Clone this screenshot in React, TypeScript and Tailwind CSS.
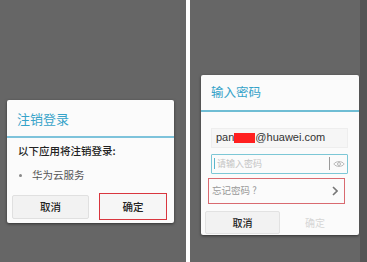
import React from 'react'

const cjk = { fontFamily: '"Noto Sans CJK SC", "Noto Sans", sans-serif' }

function LogoutPanel() {
  return (
    <div className="w-[186px] h-full bg-[#666666] pt-[100px] pl-[7px]">
      <div className="w-[167px] h-[123px] bg-[#fbfbfb] rounded-[2px] shadow-[0_1px_3px_rgba(0,0,0,0.5)] flex flex-col">
        {/* Title */}
        <div className="h-[36px] flex items-center pl-[10px] pt-[2px] text-[13px] text-[#36a3c9]">注销登录</div>
        <div className="h-[2px] bg-[#7ec3db]" />
        {/* Body */}
        <div className="pl-[11px] pt-[5px] text-[10.5px] font-medium text-[#222] leading-[16px]">以下应用将注销登录:</div>
        <div className="flex items-center pl-[12px] pt-[8px] text-[10.5px] text-[#555] leading-[16px]">
          <span className="w-[3px] h-[3px] rounded-full bg-[#888] mr-[10px]" />
          华为云服务
        </div>
        {/* Buttons */}
        <div className="flex items-center pl-[5px] pt-[10px] gap-[10px]">
          <button className="w-[77px] h-[24px] bg-[#f2f2f2] border border-[#e0e0e0] rounded-[2px] text-[10.5px] font-medium text-[#222]">
            取消
          </button>
          <button className="w-[68px] h-[27px] bg-[#f6f6f6] border border-[#d9363e] text-[10.5px] font-medium text-[#222]">
            确定
          </button>
        </div>
      </div>
    </div>
  )
}

function EyeIcon() {
  return (
    <svg width="12" height="8" viewBox="0 0 12 8" fill="none" stroke="#b9b9b9" strokeWidth="1">
      <path d="M0.8 4 C3 0.8 9 0.8 11.2 4 C9 7.2 3 7.2 0.8 4 Z" />
      <circle cx="6" cy="4" r="1.5" />
    </svg>
  )
}

function PasswordPanel() {
  return (
    <div className="flex-1 h-full bg-[#666666] pt-[75px] pl-[11px] flex">
      <div className="w-[158px] h-[160px] bg-[#fbfbfb] rounded-[2px] shadow-[0_1px_3px_rgba(0,0,0,0.5)] flex flex-col">
        {/* Title */}
        <div className="h-[35px] flex items-center pl-[10px] text-[12.5px] text-[#36a3c9]">输入密码</div>
        <div className="h-[1.5px] bg-[#6fbdd4]" />
        <div className="flex flex-col pt-[16px] pl-[10px] pr-[11px]">
          {/* Email */}
          <div className="h-[20px] flex items-center bg-[#f6f6f6] border border-[#eeeeee] pl-[4px] text-[11px] text-[#333]" style={{ fontFamily: '"Liberation Sans", Arial, sans-serif' }}>
            pan
            <span className="inline-block w-[21px] h-[10px] bg-[#ff1f1f]" />
            @huawei.com
          </div>
          {/* Password */}
          <div className="mt-[6px] h-[20px] flex items-center border border-[#7cc7d6] rounded-[1px] pl-[2px]">
            <span className="w-[1px] h-[11px] bg-[#5bb6cc]" />
            <span className="ml-[2px] flex-1 text-[9px] text-[#c4c4c4]">请输入密码</span>
            <span className="w-[1px] h-[13px] bg-[#9a9a9a]" />
            <span className="w-[17px] flex justify-center">
              <EyeIcon />
            </span>
          </div>
        </div>
        {/* Forgot password */}
        <div className="mt-[4px] ml-[7px] w-[137px] h-[26px] flex items-center justify-between border border-[#d96a70] pl-[3px] pr-[6px]">
          <span className="text-[9.5px] text-[#999]">忘记密码 ?</span>
          <svg width="6" height="10" viewBox="0 0 6 10" fill="none" stroke="#777" strokeWidth="1.6">
            <path d="M1 1 L5 5 L1 9" />
          </svg>
        </div>
        {/* Buttons */}
        <div className="flex mt-[7px] pl-[4px]">
          <button className="w-[75px] h-[23px] bg-[#f2f2f2] border border-[#e2e2e2] rounded-[2px] text-[10px] font-medium text-[#222]">
            取消
          </button>
          <button className="w-[70px] h-[23px] text-[10px] text-[#d6d6d6]">确定</button>
        </div>
      </div>
    </div>
  )
}

export default function App() {
  return (
    <div className="w-[367px] h-[262px] flex overflow-hidden" style={cjk}>
      <LogoutPanel />
      <div className="w-[4px] h-full bg-white" />
      <PasswordPanel />
      <div className="w-[7px] h-full bg-[#555555]" />
    </div>
  )
}
